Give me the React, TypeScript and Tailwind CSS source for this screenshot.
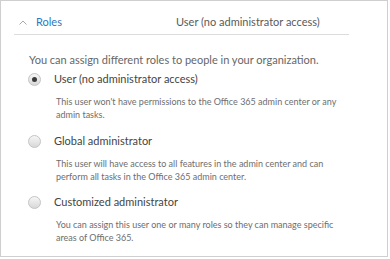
import React from "react";

function Radio({ checked }: { checked?: boolean }) {
  return (
    <span className="flex h-[13px] w-[13px] shrink-0 items-center justify-center rounded-full border border-[#c4c4c4] bg-gradient-to-b from-[#f6f6f6] to-[#d8d8d8]">
      {checked && <span className="h-[5px] w-[5px] rounded-full bg-[#3a3a3a]" />}
    </span>
  );
}

const roles = [
  {
    label: "User (no administrator access)",
    desc: "This user won't have permissions to the Office 365 admin center or any admin tasks.",
    checked: true,
    gap: "mt-[1px]",
  },
  {
    label: "Global administrator",
    desc: "This user will have access to all features in the admin center and can perform all tasks in the Office 365 admin center.",
    gap: "mt-[10px]",
  },
  {
    label: "Customized administrator",
    desc: "You can assign this user one or many roles so they can manage specific areas of Office 365.",
    gap: "mt-[9px]",
  },
];

export default function App() {
  return (
    <div
      className="h-[259px] w-[390px] overflow-hidden bg-white"
      style={{ fontFamily: "Lato, 'Open Sans', sans-serif" }}
    >
      <div className="h-[257px] w-[388px] border border-[#cfcfcf] bg-white">
        {/* header */}
        <div className="ml-[13px] mt-[11px] flex h-[20px] items-center">
          <div className="flex w-[162px] items-center">
            <svg width="8" height="5" viewBox="0 0 8 5" className="ml-[5px]">
              <path d="M0.5 4.5 L4 1 L7.5 4.5" fill="none" stroke="#a8a8a8" strokeWidth="1" />
            </svg>
            <span className="ml-[9px] text-[11px] text-[#2b79c2]">Roles</span>
          </div>
          <span className="text-[11px] text-[#5a5a5a]">User (no administrator access)</span>
        </div>
        <div className="ml-[13px] mt-[2px] h-px w-[335px] bg-[#dcdcdc]" />

        <p className="ml-[28px] mt-[17px] text-[11px] leading-[16px] text-[#666]">
          You can assign different roles to people in your organization.
        </p>

        <div className="ml-[27px] flex flex-col">
          {roles.map((r) => (
            <div key={r.label} className={r.gap}>
              <div className="flex h-[20px] items-center gap-[13px]">
                <Radio checked={r.checked} />
                <span className="text-[11px] text-[#444]">{r.label}</span>
              </div>
              <p className="ml-[28px] mt-[6px] w-[300px] text-[9px] leading-[13px] text-[#6e6e6e]">{r.desc}</p>
            </div>
          ))}
        </div>
      </div>
    </div>
  );
}
